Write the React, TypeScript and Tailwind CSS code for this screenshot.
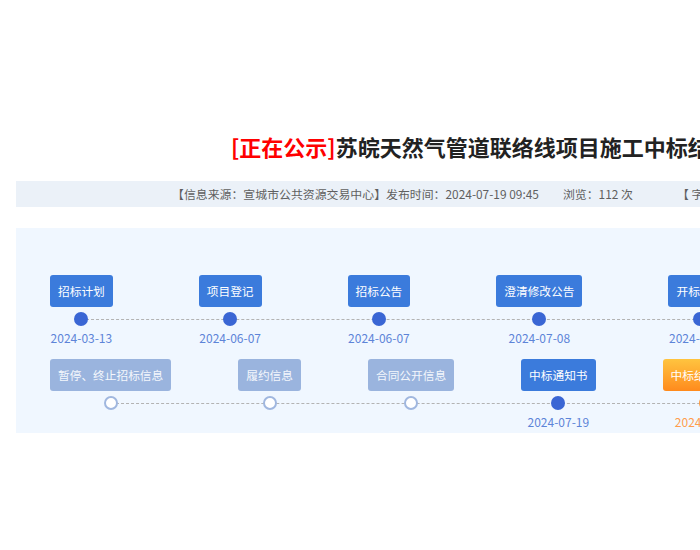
import React from 'react';

type Step = {
  label: string;
  date?: string;
  state: 'done' | 'none' | 'current';
};

const rowOne: Step[] = [
  { label: '招标计划', date: '2024-03-13', state: 'done' },
  { label: '项目登记', date: '2024-06-07', state: 'done' },
  { label: '招标公告', date: '2024-06-07', state: 'done' },
  { label: '澄清修改公告', date: '2024-07-08', state: 'done' },
  { label: '开标记录', date: '2024-07-12', state: 'done' },
];

const rowTwo: Step[] = [
  { label: '暂停、终止招标信息', state: 'none' },
  { label: '履约信息', state: 'none' },
  { label: '合同公开信息', state: 'none' },
  { label: '中标通知书', date: '2024-07-19', state: 'done' },
  { label: '中标结果公示', date: '2024-07-19', state: 'current' },
];

function StepItem({ step }: { step: Step }) {
  const btn =
    step.state === 'done'
      ? 'bg-[#3b7bdc] text-white'
      : step.state === 'current'
        ? 'bg-linear-to-b from-[#ffc43f] to-[#ff8a1c] text-white'
        : 'bg-[#9ab4de] text-[#f4f7fc]';
  const dot =
    step.state === 'none'
      ? 'w-[14px] h-[14px] bg-white border-2 border-[#a0b7df]'
      : step.state === 'current'
        ? 'w-[14px] h-[14px] bg-[#ff9a3c]'
        : 'w-[14px] h-[14px] bg-[#3a66d4]';
  const dateColor = step.state === 'current' ? 'text-[#ff9d4d]' : 'text-[#5d84d8]';

  return (
    <div className="flex flex-col items-center shrink-0">
      <div className={`h-[32px] px-[8px] rounded-[3px] flex items-center text-[11.7px] whitespace-nowrap ${btn}`}>
        {step.label}
      </div>
      <div className={`mt-[5px] rounded-full relative z-10 ${dot}`} />
      <div className={`mt-[4px] h-[16px] leading-[16px] text-[12px] whitespace-nowrap ${dateColor}`}>
        {step.date ?? ''}
      </div>
    </div>
  );
}

function StepRow({ steps, gap, lineLeft }: { steps: Step[]; gap: string; lineLeft: string }) {
  return (
    <div className={`relative flex ${gap}`}>
      <div className={`absolute top-[44px] right-0 border-t border-dashed border-[#b3b3b3] ${lineLeft}`} />
      {steps.map((s) => (
        <StepItem key={s.label} step={s} />
      ))}
    </div>
  );
}

export default function App() {
  return (
    <div
      className="w-[700px] h-[550px] overflow-hidden bg-white"
      style={{ fontFamily: '"Noto Sans CJK SC", "Noto Sans", sans-serif' }}
    >
      {/* Title */}
      <div className="pt-[132px] pl-[231px] whitespace-nowrap text-[22px] leading-[28px] font-bold text-[#222]">
        <span className="text-[#f00]">[正在公示]</span>苏皖天然气管道联络线项目施工中标结果公示
      </div>

      {/* Info bar */}
      <div className="mt-[21px] ml-[16px] w-[1100px] h-[26px] bg-[#ebf1f8] flex items-center pl-[156px] text-[11.9px] text-[#5f5f5f] whitespace-nowrap">
        <span>【信息来源：宣城市公共资源交易中心】发布时间：2024-07-19 09:45</span>
        <span className="ml-[24px]">浏览：112 次</span>
        <span className="ml-[44px]">【 字体：大 中 小 】</span>
      </div>

      {/* Timeline */}
      <div className="mt-[21px] ml-[16px] w-[1100px] h-[205px] bg-[#f0f7ff] pt-[47px] pl-[34px]">
        <StepRow steps={rowOne} gap="gap-[86px]" lineLeft="left-[31px]" />
        <div className="mt-[13px]">
          <StepRow steps={rowTwo} gap="gap-[67px]" lineLeft="left-[61px]" />
        </div>
      </div>
    </div>
  );
}
